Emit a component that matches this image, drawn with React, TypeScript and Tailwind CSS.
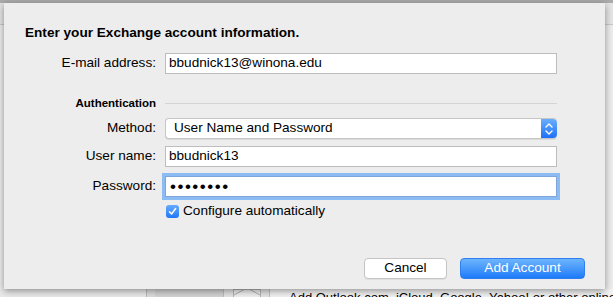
import React from "react";

const font = { fontFamily: '"Liberation Sans", Arial, Helvetica, sans-serif' };

function Stepper() {
  return (
    <div className="flex h-full w-[16px] flex-col items-center justify-center gap-[2px] rounded-r-[4px] bg-gradient-to-b from-[#69aefc] to-[#1c6ff8]">
      <svg width="8" height="5" viewBox="0 0 8 5" fill="none">
        <path d="M1 4 L4 1 L7 4" stroke="white" strokeWidth="1.4" strokeLinecap="round" strokeLinejoin="round" />
      </svg>
      <svg width="8" height="5" viewBox="0 0 8 5" fill="none">
        <path d="M1 1 L4 4 L7 1" stroke="white" strokeWidth="1.4" strokeLinecap="round" strokeLinejoin="round" />
      </svg>
    </div>
  );
}

export default function App() {
  return (
    <div className="relative h-[297px] w-[613px] overflow-hidden bg-[#ececec] text-black" style={font}>
      {/* background window */}
      <div className="h-[3px] bg-[#ababab]" />
      <div className="h-[21px] bg-[#e4e4e4]" />
      <div className="h-px bg-[#c8c8c8]" />
      <div className="pt-[264px]">
        <div className="flex h-[20px] text-[13px]">
          <div className="w-[146px] bg-[#e9e9e9]" />
          <div className="w-px bg-[#b9b9b9]" />
          <div className="w-[8px] bg-[#dcdcdc]" />
          <div className="w-[68px] bg-[#d3d3d3]" />
          <div className="w-px bg-[#bdbdbd]" />
          <div className="w-[9px] bg-[#e4e4e4]" />
          <div className="w-[28px] border border-[#b5b5b5] bg-[#efefef]">
            <svg width="26" height="18" viewBox="0 0 26 18">
              <path d="M0 5 L13 -2 L26 5" stroke="#b0b0b0" strokeWidth="1" fill="none" />
            </svg>
          </div>
          <div className="w-[8px] bg-[#e4e4e4]" />
          <div className="w-px bg-[#c0c0c0]" />
          <div className="flex-1 overflow-hidden whitespace-nowrap bg-[#f2f2f2] pl-[19px] pt-[1px] leading-[15px]">
            Add Outlook.com, iCloud, Google, Yahoo! or other online email
          </div>
        </div>
      </div>

      {/* sheet */}
      <div className="absolute left-[4px] top-[3px] flex h-[286px] w-[601px] flex-col bg-[#ededed] pb-[10px] pl-[21px] pr-[20px] pt-[22px] shadow-[0_2px_7px_rgba(0,0,0,0.4)]">
        <div className="h-4 text-[13.6px] font-bold leading-4">Enter your Exchange account information.</div>

        <div className="mt-[12px] grid grid-cols-[131px_392px] items-center gap-x-[9px] text-[13.6px]">
          <div className="text-right">E-mail address:</div>
          <div className="flex h-[21px] items-center border border-[#bdbdbd] bg-white pl-[3px]">bbudnick13@winona.edu</div>
        </div>

        <div className="mt-[22px] grid h-[14px] grid-cols-[131px_392px] items-center gap-x-[9px]">
          <div className="text-right text-[11.5px] font-bold leading-[14px]">Authentication</div>
          <div className="h-px bg-[#d4d4d4]" />
        </div>

        <div className="mt-[8px] grid grid-cols-[131px_392px] items-center gap-x-[9px] text-[13.6px]">
          <div className="text-right">Method:</div>
          <div className="flex h-[21px] items-stretch rounded-[4px] border border-r-0 border-[#c6c6c6] bg-white shadow-[0_1px_0_rgba(0,0,0,0.08)]">
            <div className="flex flex-1 items-center pl-[8px]">User Name and Password</div>
            <Stepper />
          </div>
        </div>

        <div className="mt-[7px] grid grid-cols-[131px_392px] items-center gap-x-[9px] text-[13.6px]">
          <div className="text-right">User name:</div>
          <div className="flex h-[21px] items-center border border-[#bdbdbd] bg-white pl-[3px]">bbudnick13</div>
        </div>

        <div className="mt-[9px] grid grid-cols-[131px_392px] items-center gap-x-[9px] text-[13.6px]">
          <div className="text-right">Password:</div>
          <div className="flex h-[21px] items-center border border-[#7fa6d8] bg-white pl-[4px] text-[17px] tracking-[1.5px] shadow-[0_0_0_3px_#8cbcf4]">
            ••••••••
          </div>
        </div>

        <div className="mt-[4px] grid h-[16px] grid-cols-[131px_392px] items-center gap-x-[9px] text-[13.6px]">
          <div />
          <div className="flex items-center gap-[4px]">
            <div className="ml-[1px] flex h-[13px] w-[13px] items-center justify-center rounded-[3px] bg-gradient-to-b from-[#65aafb] to-[#1f76f8]">
              <svg width="9" height="9" viewBox="0 0 9 9" fill="none">
                <path d="M1.5 4.8 L3.6 7 L7.6 1.5" stroke="white" strokeWidth="1.5" strokeLinecap="round" strokeLinejoin="round" />
              </svg>
            </div>
            <span>Configure automatically</span>
          </div>
        </div>

        <div className="mt-auto flex justify-end gap-[13px] text-[13.6px]">
          <div className="flex h-[21px] w-[83px] items-center justify-center rounded-[4px] border border-[#c4c4c4] bg-white shadow-[0_1px_0_rgba(0,0,0,0.06)]">Cancel</div>
          <div className="flex h-[21px] w-[125px] items-center justify-center rounded-[4px] border border-[#2f7ff0] bg-gradient-to-b from-[#6cb4fc] to-[#1a7bf9] text-white">Add Account</div>
        </div>
      </div>
    </div>
  );
}
